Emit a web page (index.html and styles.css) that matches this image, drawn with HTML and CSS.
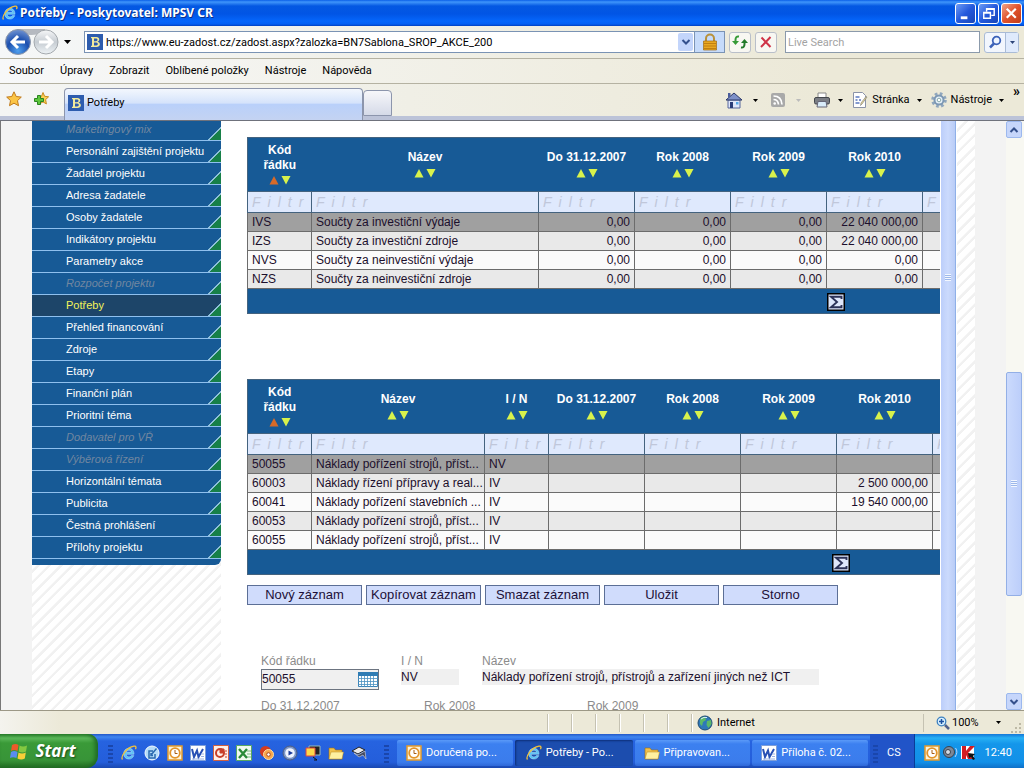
FILE: index.html
```html
<!DOCTYPE html>
<html lang="cs">
<head>
<meta charset="utf-8">
<title>Potřeby - Poskytovatel: MPSV CR</title>
<link rel="stylesheet" href="styles.css">
</head>
<body>
<svg class="defs" aria-hidden="true">
  <symbol id="ie" viewBox="0 0 16 16"><path d="M13 9.300H5.200c.2 1.700 1.300 2.600 2.800 2.600 1.200 0 1.900-.5 2.400-1.300h2.400c-.8 2.300-2.600 3.500-4.900 3.500-3.200 0-5.200-2.300-5.200-5.400 0-3.200 2.200-5.400 5.200-5.400 3.400 0 5.200 2.600 5.100 6zM10.500 7.300C10.300 5.900 9.300 5.200 8 5.200S5.600 6 5.300 7.300z" fill="#5cc3f5" stroke="#d5f1ff" stroke-width=".4"/><path d="M1.500 14.500C-.5 12 5 2.500 13 1.200c2.300-.4 2.300 1.500 1.400 3" fill="none" stroke="#f3c13a" stroke-width="1.300"/></symbol>
  <symbol id="fav" viewBox="0 0 16 16"><path fill="#2d5cae" d="M0 0h16v16H0z"/><path d="M4 3h5.500c3.500 0 3.500 4 1 4.700 3.500.7 3.200 5.300-1 5.300H4v-1.300h1V4.300H4zM7 4.500v2.700h2c2 0 2-2.700 0-2.700zm0 4v3h2.200c2.200 0 2.200-3 0-3z" fill="#f3eb9c"/></symbol>
  <symbol id="up" viewBox="0 0 10 10"><path d="M5 1l4.500 8.500h-9z"/></symbol>
  <symbol id="dn" viewBox="0 0 10 10"><path d="M.5 1h9L5 9.500z"/></symbol>
  <symbol id="car" viewBox="0 0 7 4"><path d="M0 0h7L3.500 4z"/></symbol>
  <symbol id="chev" viewBox="0 0 10 8"><path d="M1.500 2L5 5.500 8.500 2" fill="none" stroke="#34508c" stroke-width="2"/></symbol>
  <symbol id="folder" viewBox="0 0 16 16"><path d="M1 3h5l1.500 2H14v9H1z" fill="#f1c14b" stroke="#9a6c12" stroke-width=".6"/><path d="M1 14l2-7h12.500L14 14z" fill="#fff0a0" stroke="#b98a20" stroke-width=".5"/></symbol>
  <symbol id="outlook" viewBox="0 0 16 16"><path fill="#fdf3d8" stroke="#e59b2a" stroke-width="1.500" d="M1 1h14v14H1z"/><circle cx="8" cy="8" r="4.800" fill="#fff" stroke="#e2942a" stroke-width="1.800"/><path d="M8 5v3.500h2.500" stroke="#a85c10" fill="none"/></symbol>
  <symbol id="word" viewBox="0 0 16 16"><path fill="#fff" stroke="#7f9fd8" d="M.5.5h15v15H.5z"/><path d="M2 4l2 8 3-6.500 1.500 6.500L13 4" fill="none" stroke="#2850b4" stroke-width="2"/><path d="M2 14h12M11 9h3M11 11.500h3" stroke="#9ab2e4"/></symbol>
  <symbol id="sigma" viewBox="0 0 18 18"><path fill="#000" d="M0 0h18v18H0z"/><path fill="#dfe7fb" d="M1.500 1.500h15v15h-15z"/><path d="M14.500 6V3.800H4l6 5.200-6 5.200h10.500V12" fill="none" stroke="#2c3258" stroke-width="1.900"/></symbol>
</svg>

<header class="titlebar">
  <svg class="i16"><use href="#ie"/></svg>
  <h1>Potřeby - Poskytovatel: MPSV CR</h1>
  <div class="winbtns">
    <button aria-label="Minimalizovat"><svg viewBox="0 0 20 20"><path d="M5 13h7v3H5z" fill="#fff"/></svg></button>
    <button aria-label="Obnovit"><svg viewBox="0 0 20 20"><path d="M8 8V5h8v7h-3M8 5.500h8M5 9h7v6H5zM5 9.500h7" fill="none" stroke="#fff" stroke-width="1.500"/></svg></button>
    <button class="close" aria-label="Zavřít"><svg viewBox="0 0 20 20"><path d="M5 5l9.500 9.500M14.500 5L5 14.500" stroke="#fff" stroke-width="2.300"/></svg></button>
  </div>
</header>

<div class="navrow">
  <div class="travel">
    <svg width="56" height="28" viewBox="0 0 56 28" role="img" aria-label="Zpět a vpřed">
      <defs><radialGradient id="gb" cx=".5" cy=".85" r=".9"><stop offset="0" stop-color="#4fa0ee"/><stop offset=".5" stop-color="#1c4fae"/><stop offset="1" stop-color="#7c9cd6"/></radialGradient><linearGradient id="gf" x2="0" y2="1"><stop offset="0" stop-color="#f6f7f8"/><stop offset=".5" stop-color="#c6ccd2"/><stop offset="1" stop-color="#eef3f6"/></linearGradient></defs>
      <path d="M13 1h28v4q-14 4-28 0z" fill="#b5b9c0"/>
      <circle cx="14" cy="14" r="12.500" fill="url(#gb)" stroke="#8b95a8"/><circle cx="42" cy="14" r="12" fill="url(#gf)" stroke="#a4a9ae"/>
      <path d="M21 14H9M14 8l-6 6 6 6" fill="none" stroke="#fff" stroke-width="3"/><path d="M35 14h12M42 8l6 6-6 6" fill="none" stroke="#fff" stroke-width="3"/>
    </svg>
    <svg class="caret"><use href="#car"/></svg>
  </div>
  <div class="address">
    <svg class="i16"><use href="#fav"/></svg>
    <input type="text" aria-label="Adresa" value="https://www.eu-zadost.cz/zadost.aspx?zalozka=BN7Sablona_SROP_AKCE_200">
    <button class="drop" aria-label="Historie adres"><svg width="10" height="8"><use href="#chev"/></svg></button>
    <button class="lock" aria-label="Zabezpečení"><svg width="16" height="18" viewBox="0 0 16 18"><path d="M4 9V5.500a4 4 0 018 0V9" fill="none" stroke="#b8913a" stroke-width="2"/><path d="M1.500 8h13v9h-13z" fill="#e9a820" stroke="#a06c12" stroke-width=".7"/><path d="M2 10.500h12M2 13h12M2 15.500h12" stroke="#c07f10"/></svg></button>
  </div>
  <button class="tool" aria-label="Aktualizovat"><svg width="18" height="16" viewBox="0 0 18 16"><path d="M8 2.500Q4.500 2 4.500 6v2" fill="none" stroke="#369a36" stroke-width="2"/><path d="M1 7h7l-3.500 4z" fill="#369a36"/><path d="M10 13.500q3.500.5 3.500-3.500V8" fill="none" stroke="#237a2a" stroke-width="2"/><path d="M10 9h7l-3.500-4z" fill="#237a2a"/></svg></button>
  <button class="tool" aria-label="Zastavit"><svg width="14" height="14" viewBox="0 0 14 14"><path d="M2.500 2.500l9 9.500M11.500 2L2 12" stroke="#cf3347" stroke-width="2"/></svg></button>
  <input class="search" type="text" placeholder="Live Search" aria-label="Live Search">
  <div class="searchbtn">
    <button aria-label="Hledat"><svg width="14" height="14" viewBox="0 0 14 14"><circle cx="8.500" cy="5.500" r="3.800" fill="#eef5ff" stroke="#3c62b8" stroke-width="1.800"/><path d="M6 8.500L2 12.500" stroke="#3c62b8" stroke-width="2.500"/></svg></button>
    <button class="narrow" aria-label="Možnosti hledání"><svg class="caret mini"><use href="#car"/></svg></button>
  </div>
</div>

<nav class="menu"><a href="#">Soubor</a><a href="#">Úpravy</a><a href="#">Zobrazit</a><a href="#">Oblíbené položky</a><a href="#">Nástroje</a><a href="#">Nápověda</a></nav>

<div class="tabrow">
  <div class="favs">
    <svg class="i16" viewBox="0 0 16 16"><path d="M8 .8l2.200 4.700 5.100.6-3.800 3.500 1 5.100L8 12.200l-4.500 2.500 1-5.100L.7 6.100l5.100-.6z" fill="#fbc545" stroke="#c07a1c"/></svg>
    <svg class="i16" viewBox="0 0 16 16"><path d="M10 1.500l1.600 3.800 4 .5-3 2.800.8 4.300-3.400-2-3.600 2 1-4.300L4 5.800l4.500-.5z" fill="#fbd254" stroke="#c98b22"/><path d="M4.500 4.500h3v3h3v3h-3v3h-3v-3h-3v-3h3z" fill="#5cc63c" stroke="#2b8420"/></svg>
  </div>
  <a class="tab" href="#"><svg class="i16"><use href="#fav"/></svg>Potřeby</a>
  <button class="newtab" aria-label="Nová karta"></button>
  <div class="commands">
    <button aria-label="Domů"><svg width="18" height="18" viewBox="0 0 18 18"><path d="M3 9h12v8H3z" fill="#dfe6fa" stroke="#56669c"/><path d="M9 2l8 7H1z" fill="#7d90c8" stroke="#2a3666"/><path d="M3 2h2.500v3L3 7z" fill="#4a5c9c"/><path d="M5 11h3v6H5z" fill="#2a3c78"/><path d="M11 11h2.500v2.500H11z" fill="#55a8e8"/></svg><svg class="caret mini"><use href="#car"/></svg></button>
    <button class="off" aria-label="Informační kanály"><svg class="i16" viewBox="0 0 16 16"><rect x="1" y="1" width="14" height="14" rx="2" fill="#a9a9a9"/><path d="M3.500 4q8 0 8.500 8.500M3.500 7.500q4.500 0 5 5" fill="none" stroke="#fff" stroke-width="1.700"/><circle cx="4.700" cy="11.500" r="1.300" fill="#fff"/></svg><svg class="caret mini"><use href="#car"/></svg></button>
    <button aria-label="Tisk"><svg width="18" height="16" viewBox="0 0 18 16"><path d="M5 1h8v5H5z" fill="#fff" stroke="#888"/><rect x="1.500" y="5.500" width="15" height="6.500" rx="1.500" fill="#7a7d84" stroke="#44474d"/><path d="M5 9.500h8l1 5.500H4z" fill="#d9ecfa" stroke="#667"/></svg><svg class="caret mini"><use href="#car"/></svg></button>
    <button><svg class="i16" viewBox="0 0 16 16"><path d="M1.500.5h9l3 3v12h-12z" fill="#fff" stroke="#8a93a8"/><path d="M3.500 5h4M3.500 8h2M7 8h2M3.500 11h4" stroke="#5a78c0" stroke-width="1.300"/><path d="M15 5l-5 7-1.500 1.500L9 11l5-6.500z" fill="#eedc90" stroke="#777" stroke-width=".6"/></svg>Stránka<svg class="caret mini"><use href="#car"/></svg></button>
    <button><svg class="i16" viewBox="0 0 16 16"><circle cx="8" cy="8" r="6.300" fill="none" stroke="#8fa6bd" stroke-width="3" stroke-dasharray="2.600 2.350"/><circle cx="8" cy="8" r="4.500" fill="#e9f2fa" stroke="#7d98b4" stroke-width="2"/><circle cx="8" cy="8" r="1.800" fill="#fff" stroke="#8aa"/></svg>Nástroje<svg class="caret mini"><use href="#car"/></svg></button>
    <b class="more">»</b>
  </div>
</div>

<main class="page">
  <div class="side">
    <nav class="sidenav">
      <a class="na">Marketingový mix</a><a href="#">Personální zajištění projektu</a><a href="#">Žadatel projektu</a><a href="#">Adresa žadatele</a><a href="#">Osoby žadatele</a><a href="#">Indikátory projektu</a><a href="#">Parametry akce</a><a class="na">Rozpočet projektu</a><a class="on" href="#">Potřeby</a><a href="#">Přehled financování</a><a href="#">Zdroje</a><a href="#">Etapy</a><a href="#">Finanční plán</a><a href="#">Prioritní téma</a><a class="na">Dodavatel pro VŘ</a><a class="na">Výběrová řízení</a><a href="#">Horizontální témata</a><a href="#">Publicita</a><a href="#">Čestná prohlášení</a><a href="#">Přílohy projektu</a>
    </nav>
  </div>
  <div class="content">
    <div class="gridwrap first">
      <table class="grid">
        <colgroup><col class="c64"><col class="c227"><col class="c96"><col class="c96"><col class="c96"><col class="c96"><col class="c96"></colgroup>
        <thead>
          <tr><th>Kód<br>řádku<span class="sort act"><svg><use href="#up"/></svg><svg><use href="#dn"/></svg></span></th><th>Název<span class="sort"><svg><use href="#up"/></svg><svg><use href="#dn"/></svg></span></th><th>Do 31.12.2007<span class="sort"><svg><use href="#up"/></svg><svg><use href="#dn"/></svg></span></th><th>Rok 2008<span class="sort"><svg><use href="#up"/></svg><svg><use href="#dn"/></svg></span></th><th>Rok 2009<span class="sort"><svg><use href="#up"/></svg><svg><use href="#dn"/></svg></span></th><th>Rok 2010<span class="sort"><svg><use href="#up"/></svg><svg><use href="#dn"/></svg></span></th><th></th></tr>
          <tr class="filter"><td><input placeholder="Filtr" aria-label="Filtr kód řádku"></td><td><input placeholder="Filtr" aria-label="Filtr název"></td><td><input placeholder="Filtr" aria-label="Filtr do 31.12.2007"></td><td><input placeholder="Filtr" aria-label="Filtr 2008"></td><td><input placeholder="Filtr" aria-label="Filtr 2009"></td><td><input placeholder="Filtr" aria-label="Filtr 2010"></td><td><input placeholder="Filtr" aria-label="Filtr 2011"></td></tr>
        </thead>
        <tbody>
          <tr class="sel"><td>IVS</td><td>Součty za investiční výdaje</td><td class="n">0,00</td><td class="n">0,00</td><td class="n">0,00</td><td class="n">22 040 000,00</td><td></td></tr>
          <tr><td>IZS</td><td>Součty za investiční zdroje</td><td class="n">0,00</td><td class="n">0,00</td><td class="n">0,00</td><td class="n">22 040 000,00</td><td></td></tr>
          <tr><td>NVS</td><td>Součty za neinvestiční výdaje</td><td class="n">0,00</td><td class="n">0,00</td><td class="n">0,00</td><td class="n">0,00</td><td></td></tr>
          <tr><td>NZS</td><td>Součty za neinvestiční zdroje</td><td class="n">0,00</td><td class="n">0,00</td><td class="n">0,00</td><td class="n">0,00</td><td></td></tr>
        </tbody>
        <tfoot><tr><td colspan="7"><button class="sum sum-a" aria-label="Součet"><svg width="18" height="18"><use href="#sigma"/></svg></button></td></tr></tfoot>
      </table>
    </div>
    <div class="gridwrap">
      <table class="grid">
        <colgroup><col class="c64"><col class="c173"><col class="c64"><col class="c96"><col class="c96"><col class="c96"><col class="c96"><col class="c96"></colgroup>
        <thead>
          <tr><th>Kód<br>řádku<span class="sort act"><svg><use href="#up"/></svg><svg><use href="#dn"/></svg></span></th><th>Název<span class="sort"><svg><use href="#up"/></svg><svg><use href="#dn"/></svg></span></th><th>I / N<span class="sort"><svg><use href="#up"/></svg><svg><use href="#dn"/></svg></span></th><th>Do 31.12.2007<span class="sort"><svg><use href="#up"/></svg><svg><use href="#dn"/></svg></span></th><th>Rok 2008<span class="sort"><svg><use href="#up"/></svg><svg><use href="#dn"/></svg></span></th><th>Rok 2009<span class="sort"><svg><use href="#up"/></svg><svg><use href="#dn"/></svg></span></th><th>Rok 2010<span class="sort"><svg><use href="#up"/></svg><svg><use href="#dn"/></svg></span></th><th></th></tr>
          <tr class="filter"><td><input placeholder="Filtr" aria-label="Filtr kód řádku"></td><td><input placeholder="Filtr" aria-label="Filtr název"></td><td><input placeholder="Filtr" aria-label="Filtr I / N"></td><td><input placeholder="Filtr" aria-label="Filtr do 31.12.2007"></td><td><input placeholder="Filtr" aria-label="Filtr 2008"></td><td><input placeholder="Filtr" aria-label="Filtr 2009"></td><td><input placeholder="Filtr" aria-label="Filtr 2010"></td><td><input placeholder="Filtr" aria-label="Filtr 2011"></td></tr>
        </thead>
        <tbody>
          <tr class="sel"><td>50055</td><td>Náklady pořízení strojů, příst...</td><td>NV</td><td></td><td></td><td></td><td></td><td></td></tr>
          <tr><td>60003</td><td>Náklady řízení přípravy a real...</td><td>IV</td><td></td><td></td><td></td><td class="n">2 500 000,00</td><td></td></tr>
          <tr><td>60041</td><td>Náklady pořízení stavebních ...</td><td>IV</td><td></td><td></td><td></td><td class="n">19 540 000,00</td><td></td></tr>
          <tr><td>60053</td><td>Náklady pořízení strojů, příst...</td><td>IV</td><td></td><td></td><td></td><td></td><td></td></tr>
          <tr><td>60055</td><td>Náklady pořízení strojů, příst...</td><td>IV</td><td></td><td></td><td></td><td></td><td></td></tr>
        </tbody>
        <tfoot><tr><td colspan="8"><button class="sum sum-b" aria-label="Součet"><svg width="18" height="18"><use href="#sigma"/></svg></button></td></tr></tfoot>
      </table>
    </div>
    <div class="actions"><button>Nový záznam</button><button>Kopírovat záznam</button><button>Smazat záznam</button><button>Uložit</button><button>Storno</button></div>
    <form class="detail">
      <div class="fields">
        <div class="f-code"><label for="kod">Kód řádku</label>
          <div class="picker"><input id="kod" type="text" value="50055"><button type="button" aria-label="Vybrat"><svg width="20" height="15" viewBox="0 0 20 15"><path fill="#fff" stroke="#3b84b8" d="M.5.500h19v14H.5z"/><path fill="#2f7cb4" d="M0 0h20v4H0z"/><path d="M3.500 4v11M6.500 4v11M9.500 4v11M12.500 4v11M15.500 4v11M0 6.500h20M0 9.500h20M0 12.500h20" stroke="#4a90c0" stroke-width=".8"/></svg></button></div></div>
        <div class="f-in"><label for="in">I / N</label><input id="in" type="text" value="NV"></div>
        <div class="f-name"><label for="nazev">Název</label><input id="nazev" type="text" value="Náklady pořízení strojů, přístrojů a zařízení jiných než ICT"></div>
      </div>
      <div class="years"><span>Do 31.12.2007</span><span>Rok 2008</span><span>Rok 2009</span></div>
    </form>
  </div>
  <div class="innerbar"><i class="ridges"></i></div>
  <div class="hatch"></div>
  <div class="margin"></div>
  <div class="scroll">
    <button aria-label="Nahoru"><svg class="flip" width="10" height="8"><use href="#chev"/></svg></button>
    <div class="track"><div class="thumb"><i class="ridges"></i></div></div>
    <button aria-label="Dolů"><svg width="10" height="8"><use href="#chev"/></svg></button>
  </div>
</main>

<footer class="status">
  <div class="panes"><i></i><i></i><i></i><i></i><i></i><i></i><i></i></div>
  <div class="zone"><svg class="i16" viewBox="0 0 16 16"><circle cx="8" cy="8" r="7" fill="#2e78b8" stroke="#1e4a72"/><path d="M3 4q3-3 5-2l1 3-3 2-1 4-2-2zM10 6l4-1 .5 4-3 4-2-3z" fill="#5cb868"/><path d="M4 4q3-2.500 6-1.500" stroke="#d9f2ff" fill="none"/></svg>Internet</div>
  <button class="zoom"><svg width="14" height="14" viewBox="0 0 14 14"><circle cx="5.500" cy="5.500" r="4.300" fill="#d8f0ff" stroke="#3d80c0" stroke-width="1.300"/><path d="M3 5.500h5M5.500 3v5" stroke="#1b50a0" stroke-width="1.500"/><path d="M9 9l4 4" stroke="#50618c" stroke-width="2.500"/></svg>100%<svg class="caret mini"><use href="#car"/></svg></button>
  <svg class="grip" width="12" height="12" viewBox="0 0 12 12"><path d="M9 1h2v2H9zM9 5h2v2H9zM5 5h2v2H5zM9 9h2v2H9zM5 9h2v2H5zM1 9h2v2H1z" fill="#bdb9a6"/></svg>
</footer>

<div class="taskbar">
  <button class="start"><svg width="18" height="17" viewBox="0 0 18 17"><path d="M2 2q3.500-2 6.500 0L7.500 8Q4 6 1 8z" fill="#ee5a2a"/><path d="M9.500 2.500Q13 4.500 17 2.500L16 8.500q-3.500 2-7.300 0z" fill="#84c841"/><path d="M1 9q3-2 6.500 0l-1 6Q3 13.500 0 15z" fill="#5a8cf0"/><path d="M8.500 9.500q3.500 2 7.300 0l-1 6q-3.500 2-7.300 0z" fill="#f8cf38"/></svg>Start</button>
  <i class="handle"></i>
  <div class="quick">
    <svg><use href="#ie"/></svg>
    <svg viewBox="0 0 16 16"><circle cx="8" cy="8" r="7" fill="#b4dcf8" stroke="#f4fbff"/><path d="M11 9v4H5V6h4M7.500 9.500l5-6M7 8v2.500h2" fill="none" stroke="#2b6bb0" stroke-width="1.500"/></svg>
    <svg><use href="#outlook"/></svg>
    <svg><use href="#word"/></svg>
    <svg viewBox="0 0 16 16"><path fill="#fff0e8" stroke="#d06040" d="M.5.5h15v15H.5z"/><circle cx="7" cy="8" r="4" fill="none" stroke="#c8402a" stroke-width="2"/><path d="M7 8V4h4v4zM12 6h2M12 9h2M12 12h2" fill="#c8402a" stroke="#c8402a"/></svg>
    <svg viewBox="0 0 16 16"><path fill="#f0faf0" stroke="#5aa862" d="M.5.5h15v15H.5z"/><path d="M3 4l8 9M11 4l-8 9" stroke="#2a8a3a" stroke-width="2.400"/><path d="M11 6h4M11 9h4M11 12h4" stroke="#7ab884"/></svg>
    <svg viewBox="0 0 16 16"><circle cx="6.500" cy="6.500" r="5.500" fill="#d43c20"/><circle cx="9.500" cy="9.500" r="5" fill="#f7a64a" stroke="#fde0a8"/><circle cx="9.500" cy="9.500" r="1.800" fill="#fff" stroke="#a84a20"/></svg>
    <svg viewBox="0 0 16 16"><circle cx="8" cy="8" r="7" fill="#7c96c8" stroke="#4c5c80"/><circle cx="8" cy="8" r="4.800" fill="#f1f5ff"/><path d="M6.500 5.500v5L11 8z" fill="#1c3c9a"/></svg>
    <svg viewBox="0 0 16 16"><path d="M4 1h11v9H4z" fill="#222" stroke="#9bb"/><path d="M1 3h9v8H1z" fill="#ffd94a" stroke="#d44"/><path d="M8 12l4 3H9" stroke="#111" fill="none"/></svg>
    <svg><use href="#folder"/></svg>
    <svg viewBox="0 0 16 16"><path d="M1 6l7-4 6 3-7 4z" fill="#e8e8ea" stroke="#222"/><path d="M3 8l4 2 7-4 1 8-3-4-4 2z" fill="#444a60" stroke="#ddd" stroke-width=".6"/></svg>
  </div>
  <i class="handle"></i>
  <div class="tasks">
    <button><svg><use href="#outlook"/></svg><span>Doručená po...</span></button>
    <button class="cur"><svg><use href="#ie"/></svg><span>Potřeby - Po...</span></button>
    <button><svg><use href="#folder"/></svg><span>Připravovan...</span></button>
    <button><svg><use href="#word"/></svg><span>Příloha č. 02...</span></button>
  </div>
  <div class="lang"><i class="handle"></i>CS</div>
  <div class="tray">
    <svg><use href="#outlook"/></svg>
    <svg viewBox="0 0 16 16"><circle cx="7" cy="7" r="5.500" fill="#7d8796" stroke="#37414f"/><circle cx="6" cy="7" r="2.500" fill="#d5dbe4" stroke="#39424e"/><path d="M13.500 3q3 4-.5 9" stroke="#b9d8ff" fill="none"/></svg>
    <svg viewBox="0 0 16 16"><path fill="#fff" d="M1 1h13v13H1z"/><path d="M2 1h4v5l4-5h5L8 8l5 6H8L6 10v4H2z" fill="#d41c24"/><path d="M8 8l7 1-2 2 2 3-2 1-2-3-2 1z" fill="#111"/></svg>
    <time>12:40</time>
  </div>
</div>
</body>
</html>
```
FILE: styles.css
```css
* { box-sizing: border-box; }
html, body { height: 100%; }
body {
  margin: 0;
  display: flex;
  flex-direction: column;
  overflow: hidden;
  background: #ece9d8;
  color: #000;
  font: 11px/14px Roboto, "Noto Sans", sans-serif;
}
button, input { font: inherit; color: inherit; margin: 0; padding: 0; border: 0; background: none; border-radius: 0; }
button { display: flex; align-items: center; justify-content: center; }
input { min-width: 0; outline: 0; }
a { color: inherit; text-decoration: none; }
svg { display: block; flex: none; }
.defs { position: absolute; width: 0; height: 0; }
.i16 { width: 16px; height: 16px; }
.caret { width: 7px; height: 4px; }
.mini { width: 5px; height: 3px; }

.titlebar {
  flex: none; height: 26px; display: flex; align-items: center; gap: 2px; padding: 0 2px;
  background: linear-gradient(#0a5fe8 0, #3f95fb 2px, #0458e2 6px, #0155e5 14px, #0566fb 21px, #0460f4 24px, #0140c0 26px);
}
.titlebar h1 { margin: 0; flex: 1; color: #fff; font-family: "Noto Sans", sans-serif; font-size: 12px; font-weight: 700; text-shadow: 1px 1px #0a2f86; white-space: nowrap; }
.winbtns { display: flex; gap: 2px; }
.winbtns button { width: 21px; height: 21px; border: 1px solid #fff; border-radius: 3px; background: linear-gradient(135deg, #6d9cf5, #2459dc 50%, #1746b8); }
.winbtns svg { width: 19px; height: 19px; }
.winbtns .close { background: linear-gradient(135deg, #f0a488, #e0522c 50%, #c03c18); }

.navrow { flex: none; height: 33px; display: flex; align-items: center; padding: 0 5px 0 4px; background: linear-gradient(90deg, #f5f7f8, #ece9d8 80%); border-bottom: 1px solid #b5b2a2; }
.travel { display: flex; align-items: center; gap: 4px; width: 80px; }
.address { flex: 1; min-width: 0; height: 22px; display: flex; align-items: center; gap: 3px; padding-left: 2px; background: #fff; border: 1px solid #7a93b4; margin-right: 4px; }
.address input { flex: 1; height: 18px; }
.drop { width: 15px; height: 18px; background: #c3d5fb; border-radius: 2px; }
.lock { width: 30px; height: 20px; margin-left: -2px; background: #c6dbfa; border-left: 1px solid #7a93b4; }
.tool { width: 22px; height: 21px; margin-right: 4px; border: 1px solid #b9bfc9; border-radius: 3px; background: #f8f7f2; }
.search { width: 195px; height: 22px; margin: 0 4px; padding-left: 2px; background: #fff; border: 1px solid #8b9aab; }
.search::placeholder { color: #a3a3a3; opacity: 1; }
.searchbtn { display: flex; height: 21px; border: 1px solid #a9bbd6; border-radius: 3px; background: #f2f6fd; fill: #2c4478; }
.searchbtn button { width: 20px; }
.searchbtn .narrow { width: 13px; border-left: 1px solid #a9bbd6; background: #dfeafc; }

.menu { flex: none; height: 25px; display: flex; align-items: center; gap: 16px; padding-left: 9px; background: linear-gradient(90deg, #f7f8f9, #ece9d8 80%); border-bottom: 1px solid #b5b2a2; white-space: nowrap; }

.tabrow { flex: none; height: 37px; display: flex; padding-top: 4px; background: linear-gradient(90deg, #f4f5f4, #ece9d8 80%); border-bottom: 1px solid #6f727c; box-shadow: inset 0 -4px #bcc3d8; }
.favs { display: flex; gap: 11px; padding: 3px 15px 0 6px; width: 64px; }
.tab { width: 299px; height: 32px; display: flex; align-items: center; gap: 3px; padding: 0 3px 4px; border: 1px solid #8c95ac; border-bottom: 0; border-radius: 4px 4px 0 0; background: linear-gradient(#f3f7fd, #d5e3fb 45%, #b9d0fa 50%, #c4d3f2); }
.newtab { width: 29px; height: 26px; margin-top: 2px; border: 1px solid #8c95ac; border-radius: 4px 4px 0 0; background: linear-gradient(#f7f7fa, #d5dae8); }
.commands { flex: 1; display: flex; align-items: center; justify-content: flex-end; gap: 9px; height: 24px; padding-right: 4px; }
.commands button { gap: 4px; }
.commands .mini { margin-left: 3px; }
.commands button:nth-child(-n+2) { margin-right: 3px; }
.commands button:nth-child(-n+2) .mini { margin-left: 6px; }
.commands .off { fill: #bbb; }
.commands .more { align-self: flex-start; font-size: 14px; line-height: 6px; }

.page { flex: 1; min-height: 0; display: flex; overflow: hidden; background: #fff; border-left: 1px solid #777; font-family: "Liberation Sans", Arial, sans-serif; font-size: 12px; }
.side { width: 220px; flex: none; border-left: 31px solid #f3f3f3; }
.side, .hatch { background: repeating-linear-gradient(135deg, #fff 0, #fff 5px, #f1f1f1 6px, #f1f1f1 8px) padding-box; }
.sidenav { margin-top: -2px; background: #175a96; padding-bottom: 6px; border-radius: 0 0 6px 0; color: #fff; font-size: 11px; }
.sidenav a { display: block; height: 22px; padding: 3px 0 0 34px; border-bottom: 1px solid #8fc0ee; background: linear-gradient(135deg, transparent 9px, #8fc0d8 9px, #8fc0d8 10px, #178048 10px) right bottom / 13px 13px no-repeat; white-space: nowrap; }
.sidenav .na { color: #7287a0; font-style: italic; }
.sidenav .on { color: #f4f45a; background-color: #1d4569; }

.content { flex: 1; min-width: 0; overflow: hidden; padding: 16px 1px 0 26px; background: #fff; }
.gridwrap { overflow: hidden; margin-bottom: 65px; }
.gridwrap + .gridwrap { margin-bottom: 10px; }
.grid { table-layout: fixed; width: 0; border-collapse: collapse; background: #175a96; border: 1px solid #44637f; color: #1c0f2c; }
.c64 { width: 64px; } .c96 { width: 96px; } .c173 { width: 173px; } .c227 { width: 227px; }
.grid th { height: 54px; padding: 1px 0 0; vertical-align: middle; color: #fff; line-height: 15px; white-space: nowrap; }
.sort { display: flex; justify-content: center; gap: 2px; height: 15px; align-items: center; fill: #d8f24c; }
.sort svg { width: 10px; height: 10px; }
.sort.act svg:first-child { fill: #d86a28; }
.filter td { height: 21px; padding: 0; background: #dfe9fd; border: 1px solid #44637f; overflow: hidden; }
.filter input { display: block; width: 100%; height: 18px; padding-left: 4px; font-size: 14px; font-style: italic; letter-spacing: 7px; }
.filter input::placeholder { color: #c0c7da; opacity: 1; }
.grid tbody td { height: 19px; padding: 0 4px; border: 1px solid #6c6c6c; background: #fbfbfb; line-height: 16px; white-space: nowrap; overflow: hidden; }
.grid tbody tr:nth-child(even) td { background: #e9e9e9; }
.grid tbody .sel td { background: #a0a0a0; }
.grid tbody .n { text-align: right; }
.grid tfoot td { height: 25px; padding: 1px 0 0; }
.sum-a { margin-left: 579px; }
.sum-b { margin-left: 584px; }

.actions { display: flex; gap: 4px; }
.actions button { width: 115px; height: 20px; border: 1px solid #5c6f96; background: #d0dcfc; color: #1c1038; font-size: 13px; white-space: nowrap; }
.detail { padding: 49px 0 0 14px; color: #8b8b8b; }
.fields { display: flex; align-items: flex-start; }
.fields label { display: block; line-height: 15px; }
.fields input { display: block; color: #1c0f2c; background: #f0f0f0; height: 16px; width: 100%; }
.f-code { width: 118px; margin-right: 22px; }
.picker { display: flex; height: 21px; border: 1px solid #6c7480; background: #f0f0f0; }
.picker input { flex: 1; height: 18px; }
.picker button { width: 20px; }
.f-in { width: 58px; margin-right: 23px; }
.f-name { width: 337px; }
.years { display: flex; margin-top: 9px; white-space: nowrap; }
.years span { width: 163px; }

.innerbar { flex: none; width: 15px; display: flex; align-items: center; justify-content: center; padding-bottom: 276px; background: linear-gradient(90deg, #bccefa, #cbdafd 50%, #b9ccf6); border-right: 1px solid #8fb0e8; }
.ridges { display: block; width: 6px; height: 7px; background: repeating-linear-gradient(#f3f7ff 0, #f3f7ff 1px, #9db8ea 1px, #9db8ea 2px); }
.hatch { flex: none; width: 19px; border-left: 1px solid #fff; }
.margin { flex: none; width: 31px; background: #f3f3f3; }
.scroll { flex: none; width: 18px; display: flex; flex-direction: column; background: #f8f8f2; padding-right: 2px; }
.scroll button { height: 17px; border: 1px solid #9cb8ee; border-radius: 2px; background: #c6d6fb; }
.flip { transform: rotate(180deg); }
.track { flex: 1; display: flex; flex-direction: column; }
.track::before { content: ""; flex: 235 0 0; }
.track::after { content: ""; flex: 98 0 0; }
.thumb { flex: 223 0 0; display: flex; align-items: center; justify-content: center; border: 1px solid #93afe6; border-radius: 2px; background: linear-gradient(90deg, #cbdafd, #bccefa); }

.status { flex: none; height: 24px; display: flex; align-items: center; padding-right: 2px; border-top: 1px solid #9c9886; background: linear-gradient(90deg, #f4f3ee, #ece9d8 60px); }
.panes { flex: 1; display: flex; justify-content: flex-end; gap: 22px; padding-right: 4px; }
.panes i { width: 2px; height: 18px; border-left: 1px solid #c5c2b2; border-right: 1px solid #fff; }
.zone { width: 227px; display: flex; align-items: center; gap: 4px; border-right: 1px solid #c5c2b2; height: 18px; }
.zoom { width: 86px; gap: 2px; justify-content: flex-start; padding-left: 12px; }
.zoom .caret { margin-left: auto; margin-right: 9px; }
.grip { align-self: flex-end; }

.taskbar { flex: none; height: 34px; display: flex; color: #fff; background: linear-gradient(#2358c8 0, #3f86f0 3px, #2663e0 7px, #245edb 28px, #1a48b0 34px); }
.taskbar svg { width: 16px; height: 16px; }
.start { width: 98px; gap: 7px; padding-top: 0; padding-right: 12px; border-radius: 0 10px 12px 0; background: linear-gradient(#2f8a2f, #5cb85a 4px, #3a9a38 9px, #389438 26px, #226c22); box-shadow: inset -3px 0 4px #1f6a24; color: #fff; font: italic bold 17px/20px "Open Sans", "Noto Sans", sans-serif; text-shadow: 1px 1px 2px #184c18; }
.taskbar .start svg { width: 18px; height: 17px; }
.handle { flex: none; width: 5px; margin: 9px 8px 5px 10px; background: repeating-linear-gradient(transparent 0, transparent 2px, #1a46ac 2px, #1a46ac 4px); }
.quick { flex: none; display: flex; align-items: center; gap: 7px; padding-top: 4px; width: 253px; }
.tasks { flex: 1; min-width: 0; display: flex; gap: 2px; padding: 6px 0 2px; }
.tasks button { flex: 1; min-width: 0; gap: 4px; justify-content: flex-start; padding-left: 9px; border-radius: 2px; background: linear-gradient(#5a9af8, #3c80f0 4px, #3b7cec 22px, #2f68d8); overflow: hidden; white-space: nowrap; color: #fff; }
.tasks .cur { background: #1c4dae; box-shadow: inset 1px 1px 2px #0d2f78; padding-left: 11px; }
.lang { flex: none; width: 44px; margin-left: 2px; display: flex; align-items: center; gap: 9px; background: #2154c8; padding-top: 3px; }
.lang .handle { align-self: stretch; margin: 6px 0 5px 3px; }
.tray { flex: none; width: 110px; display: flex; align-items: center; gap: 2px; padding: 3px 12px 0 9px; background: linear-gradient(#1477d8, #27b0f4 4px, #1496ea 10px, #1290e8 28px, #0f70c8); border-left: 1px solid #0a3c98; }
.tray time { margin-left: auto; }
```
